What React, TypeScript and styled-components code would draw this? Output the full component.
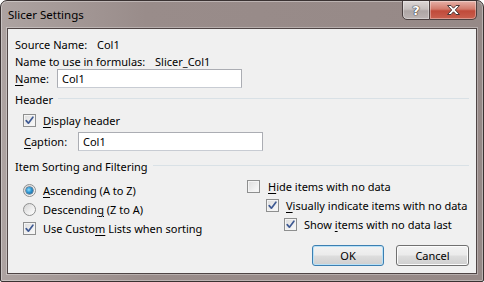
import React from 'react';
import styled, {createGlobalStyle} from 'styled-components';

const GlobalStyle = createGlobalStyle`
  html, body {
    margin: 0;
    padding: 0;
    background: #ffffff;
  }
  body {
    font-family: "Noto Sans", "Open Sans", sans-serif;
    font-size: 11px;
    color: #000;
  }
`;

type RowProps = {
    h: number;
    mt?: number;
    indent?: number;
};

export default function App() {
    return (
        <>
            <GlobalStyle/>
            <Window>
                <TitleBar>
                    <Title>Slicer Settings</Title>
                    <CaptionButtons>
                        <CaptionButton variant="help">
                            <HelpGlyph>?</HelpGlyph>
                        </CaptionButton>
                        <CaptionButton variant="close">
                            <svg width="17" height="12" viewBox="0 0 17 12">
                                <path d="M2.5 1.5 L6 1.5 L8.5 4.2 L11 1.5 L14.5 1.5 L10.3 6 L14.5 10.5 L11 10.5 L8.5 7.8 L6 10.5 L2.5 10.5 L6.7 6 Z"
                                      fill="#ffffff" stroke="#4a3a3a" strokeWidth="1" strokeLinejoin="round"/>
                            </svg>
                        </CaptionButton>
                    </CaptionButtons>
                </TitleBar>

                <Body>
                    <Row h={17}>
                        <FieldLabel width={82}>Source Name:</FieldLabel>
                        <span>Col1</span>
                    </Row>
                    <Row h={16}>
                        <FieldLabel width={140}>Name to use in formulas:</FieldLabel>
                        <span>Slicer_Col1</span>
                    </Row>
                    <Row h={19}>
                        <FieldLabel width={42}><Key>N</Key>ame:</FieldLabel>
                        <TextBox>Col1</TextBox>
                    </Row>

                    <GroupHeader h={16} mt={3}>
                        <span>Header</span>
                        <GroupLine/>
                    </GroupHeader>
                    <Row h={20} mt={3} indent={8}>
                        <CheckBox checked/>
                        <OptionText><Key>D</Key>isplay header</OptionText>
                    </Row>
                    <Row h={19} mt={2} indent={9}>
                        <FieldLabel width={54}><Key>C</Key>aption:</FieldLabel>
                        <TextBox>Col1</TextBox>
                    </Row>

                    <GroupHeader h={18} mt={6}>
                        <span>Item Sorting and Filtering</span>
                        <GroupLine/>
                    </GroupHeader>

                    <Columns>
                        <LeftColumn>
                            <Row h={19}>
                                <Radio selected/>
                                <OptionText><Key>A</Key>scending (A to Z)</OptionText>
                            </Row>
                            <Row h={19}>
                                <Radio/>
                                <OptionText>Descendin<Key>g</Key> (Z to A)</OptionText>
                            </Row>
                            <Row h={19}>
                                <CheckBox checked/>
                                <OptionText>Use Custo<Key>m</Key> Lists when sorting</OptionText>
                            </Row>
                        </LeftColumn>
                        <RightColumn>
                            <Row h={19}>
                                <CheckBox/>
                                <OptionText gap={8}><Key>H</Key>ide items with no data</OptionText>
                            </Row>
                            <Row h={19} indent={19}>
                                <CheckBox checked/>
                                <OptionText><Key>V</Key>isually indicate items with no data</OptionText>
                            </Row>
                            <Row h={19} indent={37}>
                                <CheckBox checked/>
                                <OptionText>Show <Key>i</Key>tems with no data last</OptionText>
                            </Row>
                            <ButtonRow>
                                <PushButton isDefault>OK</PushButton>
                                <PushButton>Cancel</PushButton>
                            </ButtonRow>
                        </RightColumn>
                    </Columns>
                </Body>
            </Window>
        </>
    );
}

function CheckBox({checked}: { checked?: boolean }) {
    return (
        <Box>
            {checked && (
                <svg width="11" height="11" viewBox="0 0 11 11">
                    <path d="M2.2 5.6 L4.4 8.2 L8.9 2.2" fill="none" stroke="#3f5a93" strokeWidth="1.7"
                          strokeLinecap="round" strokeLinejoin="round"/>
                </svg>
            )}
        </Box>
    );
}

function Radio({selected}: { selected?: boolean }) {
    return (
        <RadioRing>
            {selected && <RadioDot/>}
        </RadioRing>
    );
}

const Window = styled.div`
  width: 484px;
  height: 282px;
  box-sizing: border-box;
  display: flex;
  flex-direction: column;
  border: 1px solid #3a3232;
  border-radius: 7px 7px 2px 2px;
  background: linear-gradient(to right, #ada3a1 0%, #998c8a 30%, #968987 100%);
  box-shadow: inset 0 0 0 1px rgba(255, 255, 255, 0.35);
  overflow: hidden;
`;

const TitleBar = styled.div`
  height: 27px;
  display: flex;
  align-items: flex-start;
  justify-content: space-between;
  padding-left: 7px;
  padding-right: 6px;
`;

const Title = styled.div`
  line-height: 28px;
  font-size: 11.5px;
  color: #000;
`;

const CaptionButtons = styled.div`
  display: flex;
  margin-top: -1px;
`;

const CaptionButton = styled.div<{ variant: 'help' | 'close' }>`
  width: ${p => p.variant === 'close' ? 47 : 28}px;
  height: 20px;
  box-sizing: border-box;
  display: flex;
  align-items: center;
  justify-content: center;
  border: 1px solid #4b4040;
  border-left-width: ${p => p.variant === 'close' ? 0 : 1}px;
  border-radius: ${p => p.variant === 'close' ? '0 0 5px 0' : '0 0 0 5px'};
  background: ${p => p.variant === 'close'
          ? 'linear-gradient(#e6b1a8 0%, #d27a6b 45%, #c04a3a 55%, #c9604f 100%)'
          : 'linear-gradient(#dcd6d5 0%, #c6bfbe 45%, #aea6a5 55%, #bcb4b3 100%)'};
  box-shadow: inset 0 0 0 1px rgba(255, 255, 255, 0.35);
`;

const HelpGlyph = styled.span`
  font-family: "DejaVu Sans", sans-serif;
  font-weight: bold;
  font-size: 13px;
  line-height: 1;
  color: #fff;
  text-shadow: 0 0 1px #3a3030, 0 0 1px #3a3030, 0 0 1px #3a3030;
`;

const Body = styled.div`
  flex: 1;
  margin: 0 6px 7px;
  padding: 7px 7px 0;
  border: 1px solid #4f4545;
  background: #f0f0f0;
  box-shadow: 0 0 0 1px rgba(255, 255, 255, 0.3);
`;

const Row = styled.div<RowProps>`
  height: ${p => p.h}px;
  margin-top: ${p => p.mt ?? 0}px;
  padding-left: ${p => p.indent ?? 0}px;
  display: flex;
  align-items: center;
  white-space: nowrap;
`;

const FieldLabel = styled.span<{ width: number }>`
  width: ${p => p.width}px;
  flex: none;
`;

const Key = styled.span`
  text-decoration: underline;
  text-underline-offset: 2px;
`;

const TextBox = styled.div`
  width: 185px;
  height: 19px;
  box-sizing: border-box;
  display: flex;
  align-items: center;
  padding-left: 4px;
  background: #fff;
  border: 1px solid #abadb3;
  border-bottom-color: #c8ccd3;
`;

const GroupHeader = styled(Row)`
  gap: 5px;
`;

const GroupLine = styled.div`
  flex: 1;
  height: 1px;
  margin-top: -2px;
  background: #d9e1e6;
`;

const OptionText = styled.span<{ gap?: number }>`
  margin-left: ${p => p.gap ?? 7}px;
`;

const Box = styled.div`
  width: 13px;
  height: 13px;
  box-sizing: border-box;
  flex: none;
  display: flex;
  align-items: center;
  justify-content: center;
  border: 1px solid #8e8f8f;
  background: linear-gradient(135deg, #dcdcdc 0%, #ececec 50%, #fbfbfb 100%);
  box-shadow: inset 0 0 0 1px #f4f4f4;
`;

const RadioRing = styled.div`
  width: 13px;
  height: 13px;
  box-sizing: border-box;
  flex: none;
  border-radius: 50%;
  display: flex;
  align-items: center;
  justify-content: center;
  border: 1px solid #8e8f8f;
  background: linear-gradient(135deg, #d4d4d4 0%, #ebebeb 50%, #ffffff 100%);
`;

const RadioDot = styled.div`
  width: 7px;
  height: 7px;
  border-radius: 50%;
  background: radial-gradient(circle at 40% 40%, #8fe0ff 0%, #2d94d0 45%, #19507c 100%);
  box-shadow: 0 0 0 0.5px #1e3f5e;
`;

const Columns = styled.div`
  display: flex;
  margin-top: 1px;
`;

const LeftColumn = styled.div`
  flex: none;
  width: 224px;
  padding-left: 8px;
  padding-top: 5px;
`;

const RightColumn = styled.div`
  flex: 1;
  min-width: 0;
  padding-top: 1px;
`;

const ButtonRow = styled.div`
  display: flex;
  justify-content: flex-end;
  gap: 12px;
  margin-top: 11px;
`;

const PushButton = styled.div<{ isDefault?: boolean }>`
  width: ${p => p.isDefault ? 72 : 73}px;
  height: 21px;
  box-sizing: border-box;
  display: flex;
  align-items: center;
  justify-content: center;
  border: 1px solid ${p => p.isDefault ? '#3c7fb1' : '#707070'};
  border-radius: 3px;
  background: linear-gradient(#f2f2f2 0%, #ebebeb 48%, #dddddd 52%, #cfcfcf 100%);
  box-shadow: inset 0 0 0 1px ${p => p.isDefault ? '#b9e1f7' : '#fcfcfc'};
`;
